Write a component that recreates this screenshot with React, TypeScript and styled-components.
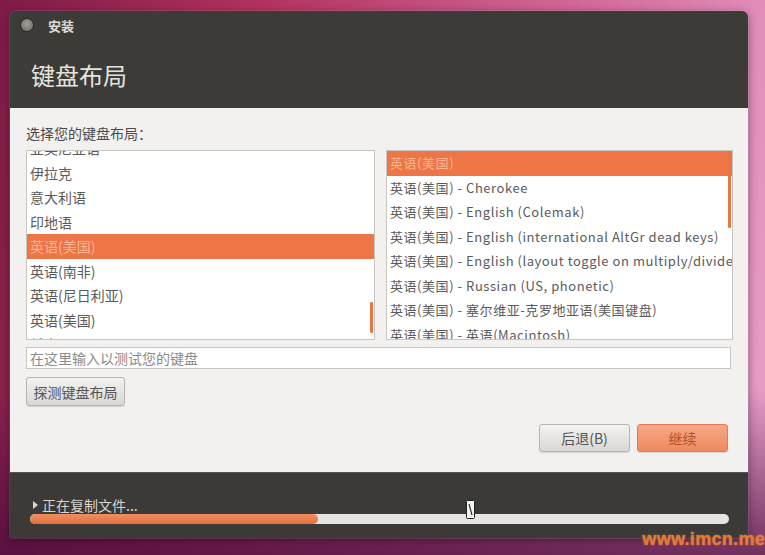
import React, { useLayoutEffect, useRef } from "react";
import styled, { createGlobalStyle } from "styled-components";

const GlobalStyle = createGlobalStyle`
  html, body {
    margin: 0;
    padding: 0;
    width: 765px;
    height: 555px;
    overflow: hidden;
  }
  body {
    font-family: "Noto Sans CJK SC", "Noto Sans", sans-serif;
  }
`;

const Desktop = styled.div`
  position: relative;
  width: 765px;
  height: 555px;
  box-sizing: border-box;
  padding: 11px 0 0 10px;
  background:
    linear-gradient(to bottom, rgba(0, 0, 0, 0) 70%, rgba(70, 10, 60, 0.75) 100%),
    linear-gradient(100deg, #7e1c46 0%, #b2325f 30%, #d46c9c 70%, #e9a2cc 100%);
`;

const Window = styled.div`
  width: 738px;
  border-radius: 6px 6px 2px 2px;
  overflow: hidden;
  box-shadow: 0 0 0 1px rgba(255, 255, 255, 0.12), 0 2px 8px rgba(0, 0, 0, 0.45);
  background: #3c3b37;
`;

const TitleBar = styled.div`
  height: 28px;
  display: flex;
  align-items: center;
  gap: 15px;
  padding-left: 11px;
  color: #dfdbd2;
  font-size: 13px;
  font-weight: bold;
`;

const CloseDot = styled.span`
  width: 12px;
  height: 12px;
  border-radius: 50%;
  background: radial-gradient(circle at 50% 40%, #a09f9a 0%, #7a7975 70%, #5d5c58 100%);
  box-shadow: 0 0 0 1px #2c2b28;
`;

const Header = styled.div`
  padding: 21px 0 18px 21px;
  font-size: 24px;
  line-height: 30px;
  color: #e6e3de;
`;

const Content = styled.div`
  background: #f2f1f0;
  padding: 16px 15px 20px 16px;
  color: #3c3c3c;
`;

const Prompt = styled.div`
  font-size: 14px;
  line-height: 18px;
  color: #4a4a4a;
  margin-bottom: 8px;
`;

const Lists = styled.div`
  display: grid;
  grid-template-columns: 349px 347px;
  gap: 11px;
`;

const ListBox = styled.div`
  position: relative;
  height: 190px;
  box-sizing: border-box;
  border: 1px solid #c9c6c1;
  background: #ffffff;
`;

const ListScroll = styled.div`
  height: 100%;
  overflow: hidden;
`;

const Row = styled.div<{ $selected?: boolean; $size: number; $spacing?: number }>`
  height: 24.5px;
  line-height: 24.5px;
  padding-left: 3px;
  font-size: ${(p) => p.$size}px;
  letter-spacing: ${(p) => p.$spacing ?? 0}px;
  white-space: nowrap;
  overflow: hidden;
  color: ${(p) => (p.$selected ? "#f7b596" : "#5b5b5b")};
  background: ${(p) => (p.$selected ? "#ee7646" : "transparent")};
`;

const Thumb = styled.div<{ $top: number; $height: number }>`
  position: absolute;
  right: 1px;
  top: ${(p) => p.$top}px;
  width: 3px;
  height: ${(p) => p.$height}px;
  border-radius: 1px;
  background: #e9763f;
`;

const TestInput = styled.input`
  display: block;
  width: 705px;
  height: 22px;
  box-sizing: border-box;
  margin-top: 7px;
  border: 1px solid #c9c6c1;
  background: #ffffff;
  padding: 0 3px;
  font-family: inherit;
  font-size: 14px;
  outline: none;
  &::placeholder {
    color: #8a8a8a;
  }
`;

const Button = styled.button<{ $primary?: boolean; $width: number; $height: number }>`
  height: ${(p) => p.$height}px;
  width: ${(p) => p.$width}px;
  border-radius: 3px;
  font-family: inherit;
  font-size: 14px;
  padding: 0;
  border: 1px solid ${(p) => (p.$primary ? "#e07d55" : "#b9b6b1")};
  color: ${(p) => (p.$primary ? "#b4532c" : "#555555")};
  background: ${(p) =>
    p.$primary
      ? "linear-gradient(to bottom, #f7a887, #ef8a5f)"
      : "linear-gradient(to bottom, #f4f3f1, #d9d7d3)"};
  box-shadow: 0 1px 1px rgba(0, 0, 0, 0.12);
`;

const DetectRow = styled.div`
  margin-top: 8px;
`;

const NavRow = styled.div`
  display: flex;
  justify-content: flex-end;
  gap: 7px;
  margin-top: 18px;
  padding-right: 5px;
`;

const Footer = styled.div`
  position: relative;
  padding: 24px 19px 14px 20px;
  background: #3b3a36;
  border-top: 1px solid #55534e;
`;

const Status = styled.div`
  display: flex;
  align-items: center;
  gap: 4px;
  padding-left: 3px;
  font-size: 14px;
  line-height: 16px;
  color: #d9d6d0;
`;

const Arrow = styled.span`
  width: 0;
  height: 0;
  border-top: 4px solid transparent;
  border-bottom: 4px solid transparent;
  border-left: 5px solid #d9d6d0;
`;

const Progress = styled.div`
  margin-top: 1px;
  height: 10px;
  border-radius: 5px;
  background: #e6e4e0;
  overflow: hidden;
`;

const ProgressFill = styled.div`
  height: 100%;
  border-radius: 5px;
  background: linear-gradient(to bottom, #f08f63, #e26f3e);
`;

const Pointer = styled.svg`
  position: absolute;
  left: 456px;
  top: 27px;
`;

const Watermark = styled.div`
  position: absolute;
  right: 0;
  bottom: 5px;
  font-family: "Liberation Sans", Arial, sans-serif;
  font-weight: bold;
  font-size: 18px;
  letter-spacing: 0.3px;
  color: #ec7a2c;
  text-shadow: 0 0 2px rgba(255, 200, 120, 0.5);
`;

const leftItems = [
  "亚美尼亚语",
  "伊拉克",
  "意大利语",
  "印地语",
  "英语(美国)",
  "英语(南非)",
  "英语(尼日利亚)",
  "英语(美国)",
  "越南语",
];

const rightItems = [
  "英语(美国)",
  "英语(美国) - Cherokee",
  "英语(美国) - English (Colemak)",
  "英语(美国) - English (international AltGr dead keys)",
  "英语(美国) - English (layout toggle on multiply/divide key)",
  "英语(美国) - Russian (US, phonetic)",
  "英语(美国) - 塞尔维亚-克罗地亚语(美国键盘)",
  "英语(美国) - 英语(Macintosh)",
];

const progress = 0.412;

export default function App() {
  const leftRef = useRef<HTMLDivElement>(null);

  useLayoutEffect(() => {
    if (leftRef.current) leftRef.current.scrollTop = 15;
  }, []);

  return (
    <>
      <GlobalStyle />
      <Desktop>
        <Window>
          <TitleBar>
            <CloseDot />
            安装
          </TitleBar>
          <Header>键盘布局</Header>
          <Content>
            <Prompt>选择您的键盘布局：</Prompt>
            <Lists>
              <ListBox>
                <ListScroll ref={leftRef}>
                  {leftItems.map((item, i) => (
                    <Row key={i} $size={14} $selected={i === 4}>
                      {item}
                    </Row>
                  ))}
                </ListScroll>
                <Thumb $top={151} $height={31} />
              </ListBox>
              <ListBox>
                <ListScroll>
                  {rightItems.map((item, i) => (
                    <Row key={i} $size={13} $spacing={0.55} $selected={i === 0}>
                      {item}
                    </Row>
                  ))}
                </ListScroll>
                <Thumb $top={0} $height={77} />
              </ListBox>
            </Lists>
            <TestInput placeholder="在这里输入以测试您的键盘" />
            <DetectRow>
              <Button $width={99} $height={29}>
                探测键盘布局
              </Button>
            </DetectRow>
            <NavRow>
              <Button $width={91} $height={28}>
                后退(B)
              </Button>
              <Button $width={91} $height={28} $primary>
                继续
              </Button>
            </NavRow>
          </Content>
          <Footer>
            <Status>
              <Arrow />
              正在复制文件...
            </Status>
            <Progress>
              <ProgressFill style={{ width: `${progress * 100}%` }} />
            </Progress>
            <Pointer width="9" height="19" viewBox="0 0 9 19">
              <rect x="0.5" y="0.5" width="8" height="18" rx="1" fill="#f4f4f4" stroke="#222" />
              <path d="M3 4 L6 15" stroke="#333" strokeWidth="1.2" />
            </Pointer>
          </Footer>
        </Window>
        <Watermark>www.imcn.me</Watermark>
      </Desktop>
    </>
  );
}
